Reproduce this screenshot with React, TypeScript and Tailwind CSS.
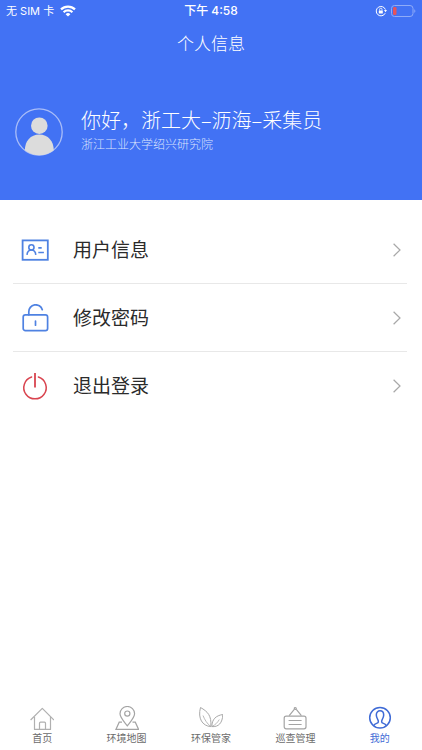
import type { ReactNode } from 'react';

function WifiIcon() {
  return (
    <svg className="w-4 h-3" viewBox="0 0 16 12" fill="none" stroke="#fff" strokeWidth="2.2" aria-hidden="true">
      <path d="M1 4.4a10 10 0 0 1 14 0" />
      <path d="M3.6 7.2a6.3 6.3 0 0 1 8.8 0" />
      <path d="M8 11.6 5.6 9.2a3.4 3.4 0 0 1 4.8 0z" fill="#fff" stroke="none" />
    </svg>
  );
}

function RotationLockIcon() {
  return (
    <svg className="w-3 h-3" viewBox="0 0 12 12" fill="none" stroke="#fff" aria-hidden="true">
      <path d="M10.2 8.2A4.7 4.7 0 1 1 10.4 4.6" strokeWidth="1" />
      <path d="M9 5h3l-1.5 2.2z" fill="#fff" stroke="none" />
      <rect x="3.8" y="5.4" width="4" height="3" rx="0.5" fill="#fff" stroke="none" />
      <path d="M4.6 5.6V4.4a1.2 1.2 0 0 1 2.4 0v1.2" strokeWidth="0.8" />
    </svg>
  );
}

function BatteryIcon() {
  return (
    <svg className="w-[25px] h-3" viewBox="0 0 25 12" fill="none" aria-hidden="true">
      <rect x="0.5" y="0.5" width="21.5" height="11" rx="3" stroke="#8fabf8" />
      <rect x="2" y="2" width="3.5" height="8" rx="1.2" fill="#e5535b" />
      <path d="M23.3 4.2c1.4.5 1.4 3.1 0 3.6z" fill="#8fabf8" />
    </svg>
  );
}

function Avatar() {
  return (
    <svg className="w-12 h-12 shrink-0" viewBox="0 0 48 48" aria-hidden="true">
      <circle cx="24" cy="24" r="23.2" fill="none" stroke="#a9bdf8" strokeWidth="1.3" />
      <circle cx="24.3" cy="17.7" r="8.3" fill="#dcdcdc" />
      <path d="M9.8 42.2C10 33 15.5 26.5 24.3 26.5S38.6 33 38.8 42.2A23.4 23.4 0 0 1 9.8 42.2z" fill="#dcdcdc" />
    </svg>
  );
}

function IdCardIcon() {
  return (
    <svg className="w-7 h-7" viewBox="0 0 28 28" fill="none" stroke="#4f82e2" aria-hidden="true">
      <rect x="1.6" y="4.4" width="25.2" height="19.4" strokeWidth="1.8" />
      <circle cx="10.4" cy="11.4" r="2.6" strokeWidth="1.6" />
      <path d="M6 18.8c.3-2.9 2-4.8 4.4-4.8s4.100 1.900 4.400 4.800" strokeWidth="1.6" />
      <path d="M17.300 11.900h3.400M17.300 16.500h5.600" strokeWidth="1.6" />
    </svg>
  );
}

function UnlockIcon() {
  return (
    <svg className="w-7 h-7" viewBox="0 0 28 28" fill="none" stroke="#4f82e2" strokeWidth="1.7" aria-hidden="true">
      <rect x="2.200" y="10.800" width="24.400" height="15.800" rx="2.200" />
      <path d="M7.800 10.800V8a6.900 6.900 0 0 1 13.500-2.300" strokeLinecap="round" />
      <path d="M14.500 17v4.200" strokeLinecap="round" />
    </svg>
  );
}

function PowerIcon() {
  return (
    <svg className="w-7 h-7" viewBox="0 0 28 28" fill="none" stroke="#d9444f" strokeWidth="1.5" aria-hidden="true">
      <path d="M10.600 5A11.200 11.200 0 1 0 17.400 5" strokeLinecap="round" />
      <path d="M14 1v14.600" strokeWidth="1.8" />
    </svg>
  );
}

function ChevronIcon() {
  return (
    <svg className="w-2 h-4" viewBox="0 0 8 16" fill="none" stroke="#a8a8a8" strokeWidth="1.2" aria-hidden="true">
      <path d="M.6 1.800 7 8 .6 14.200" />
    </svg>
  );
}

function HomeIcon() {
  return (
    <svg className="w-6 h-6" viewBox="0 0 24 24" fill="none" stroke="#b0b0b0" strokeWidth="1.200" aria-hidden="true">
      <path d="M.6 14 12.300 2.300 24 14" strokeLinejoin="round" />
      <path d="M4.500 11v12.400h16V11M9.500 23.400v-6.200a1 1 0 0 1 1-1h4a1 1 0 0 1 1 1v6.200" strokeLinejoin="round" />
    </svg>
  );
}

function MapIcon() {
  return (
    <svg className="w-6 h-6" viewBox="0 0 24 24" fill="none" stroke="#a4a4a4" strokeWidth="1.200" aria-hidden="true">
      <path d="M12.300 19.800C9.800 16.400 5 11.700 5 7.800a7.300 7.300 0 0 1 14.600 0c0 3.900-4.800 8.600-7.300 12z" />
      <circle cx="12.300" cy="7.600" r="2.600" />
      <path d="M7 16.200H4.200L.9 23.400h22.700l-3.300-7.200h-2.800" />
    </svg>
  );
}

function LeafIcon() {
  return (
    <svg className="w-6 h-6" viewBox="0 0 24 24" fill="none" stroke="#a8a8a8" aria-hidden="true">
      <path d="M1.500 1.500C8.500 5.500 12.800 9.500 11.800 20.600 3.500 20-1.500 12.500 1.500 1.500z" />
      <path d="M4 9.500c1.800 4.500 4 8 7.800 11.100" strokeWidth=".8" />
      <path d="M23.800 8.500c-7 1.200-10.800 4.700-11 12.100 6.700.6 10.700-3.600 11-12.100z" />
      <path d="M20.300 13.500c-1.700 3-4 5.400-7.500 7.100" strokeWidth=".8" />
    </svg>
  );
}

function SignIcon() {
  return (
    <svg className="w-6 h-6" viewBox="0 0 24 24" fill="none" stroke="#a4a4a4" strokeWidth="1.200" aria-hidden="true">
      <rect x="1.200" y="10.200" width="21.800" height="12.600" rx="2" />
      <path d="M6.200 9.600 11.300 3.400M13.300 3.400l5.100 6.200M5.600 14.500h13M5.600 18.500h13" />
      <circle cx="12.300" cy="2.500" r="1" />
    </svg>
  );
}

function MineIcon() {
  return (
    <svg className="w-6 h-6" viewBox="0 0 24 24" fill="none" stroke="#3f6bd6" strokeWidth="1.500" aria-hidden="true">
      <circle cx="12" cy="11.800" r="10.300" />
      <path d="M5.500 19.600c.8-1.600 2-2 3.600-2.500 1.500-.5 1.500-1.900.8-3.300C8.800 11.900 8.300 10.500 8.300 9c0-2.600 1.500-4.200 3.700-4.200s3.700 1.600 3.700 4.200c0 1.500-.5 2.900-1.600 4.800-.7 1.400-.7 2.800.8 3.300 1.600.5 2.800.9 3.600 2.500" />
    </svg>
  );
}

type MenuItem = { label: string; icon: ReactNode };
type Tab = MenuItem & { active?: boolean };

const menu: MenuItem[] = [
  { label: '用户信息', icon: <IdCardIcon /> },
  { label: '修改密码', icon: <UnlockIcon /> },
  { label: '退出登录', icon: <PowerIcon /> },
];

const tabs: Tab[] = [
  { label: '首页', icon: <HomeIcon /> },
  { label: '环境地图', icon: <MapIcon /> },
  { label: '环保管家', icon: <LeafIcon /> },
  { label: '巡查管理', icon: <SignIcon /> },
  { label: '我的', icon: <MineIcon />, active: true },
];

export default function App() {
  return (
    <div
      lang="zh-CN"
      className="min-h-screen flex flex-col bg-white font-['Noto_Sans_CJK_SC',sans-serif]"
    >
      <header className="bg-[#4272f4] text-white pb-11">
        <div className="grid grid-cols-3 items-center h-[22px] px-1.5 text-[11px] font-['Inter','Noto_Sans_CJK_SC',sans-serif]">
          <div className="flex items-center gap-1.5">
            <span>无 SIM 卡</span>
            <WifiIcon />
          </div>
          <div className="text-center font-medium text-xs">下午 4:58</div>
          <div className="flex items-center justify-end gap-1">
            <RotationLockIcon />
            <BatteryIcon />
          </div>
        </div>
        <h1 className="text-center text-[17px] leading-[42px] font-light">个人信息</h1>
        <div className="flex items-center pt-11 pl-[15px] gap-[18px]">
          <Avatar />
          <div>
            <p className="text-[20px] leading-6 font-light">你好，浙工大–沥海–采集员</p>
            <p className="text-xs leading-6 font-light text-[#dbe3fd]">浙江工业大学绍兴研究院</p>
          </div>
        </div>
      </header>

      <main className="flex-1 pl-[13px] pr-[15px] pt-4">
        <ul>
          {menu.map((item) => (
            <li key={item.label} className="border-b border-[#e8e8e8] last:border-b-0">
              <button type="button" className="flex items-center w-full h-[67px] pl-2 pr-1.5 text-left">
                {item.icon}
                <span className="flex-1 pl-6 text-[19px] text-[#2b2b2b]">{item.label}</span>
                <ChevronIcon />
              </button>
            </li>
          ))}
        </ul>
      </main>

      <nav className="grid grid-cols-5 pb-1">
        {tabs.map((tab) => (
          <button
            key={tab.label}
            type="button"
            aria-current={tab.active ? 'page' : undefined}
            className={`flex flex-col items-center text-[10px] leading-4 ${tab.active ? 'text-[#3f6bd6]' : 'text-[#6b6b6b]'}`}
          >
            {tab.icon}
            <span>{tab.label}</span>
          </button>
        ))}
      </nav>
    </div>
  );
}
